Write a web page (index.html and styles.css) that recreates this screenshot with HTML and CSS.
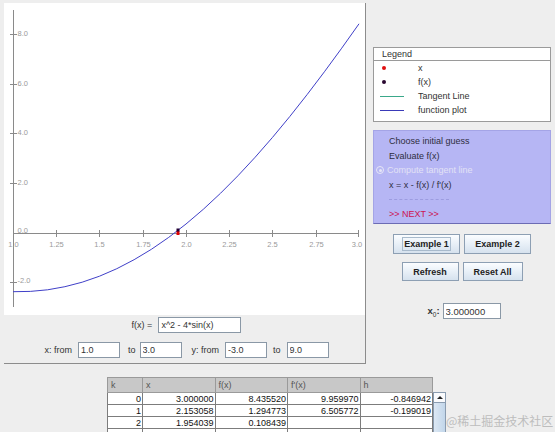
FILE: index.html
```html
<!DOCTYPE html>
<html lang="en">
<head>
    <meta charset="UTF-8">
    <meta name="viewport" content="width=device-width, initial-scale=1.0">
    <title>Newton's Method</title>
    <link rel="stylesheet" href="styles.css">
</head>
<body>
    <div class="top">
        <div class="plot-panel">
            <svg class="plot" width="361" height="312" viewBox="4 3 361 312">
                <rect x="4" y="3" width="361" height="312" fill="#ffffff"/>
                <g stroke="#8a8a8a" stroke-width="1">
                    <line x1="13.5" y1="10" x2="13.5" y2="307"/>
                    <line x1="13" y1="233.5" x2="359" y2="233.5"/>
                    <!-- x ticks -->
                    <line x1="56.5" y1="230" x2="56.5" y2="237"/>
                    <line x1="99.5" y1="230" x2="99.5" y2="237"/>
                    <line x1="143.5" y1="230" x2="143.5" y2="237"/>
                    <line x1="186.5" y1="230" x2="186.5" y2="237"/>
                    <line x1="229.5" y1="230" x2="229.5" y2="237"/>
                    <line x1="272.5" y1="230" x2="272.5" y2="237"/>
                    <line x1="316.5" y1="230" x2="316.5" y2="237"/>
                    <line x1="358.5" y1="230" x2="358.5" y2="237"/>
                    <!-- y ticks -->
                    <line x1="10" y1="34.5" x2="17" y2="34.5"/>
                    <line x1="10" y1="84.5" x2="17" y2="84.5"/>
                    <line x1="10" y1="133.5" x2="17" y2="133.5"/>
                    <line x1="10" y1="183.5" x2="17" y2="183.5"/>
                    <line x1="10" y1="282.5" x2="17" y2="282.5"/>
                </g>
                <g class="tick-label">
                    <text x="17.5" y="35.5">8.0</text>
                    <text x="17.5" y="85.5">6.0</text>
                    <text x="17.5" y="134.5">4.0</text>
                    <text x="17.5" y="184.5">2.0</text>
                    <text x="17.5" y="232.5">0.0</text>
                    <text x="17.5" y="283">-2.0</text>
                </g>
                <g class="tick-label" text-anchor="middle">
                    <text x="13.5" y="247">1.0</text>
                    <text x="56.5" y="247">1.25</text>
                    <text x="99.5" y="247">1.5</text>
                    <text x="143.5" y="247">1.75</text>
                    <text x="186.5" y="247">2.0</text>
                    <text x="229.5" y="247">2.25</text>
                    <text x="272.5" y="247">2.5</text>
                    <text x="316.5" y="247">2.75</text>
                    <text x="357" y="247">3.0</text>
                </g>
                <polyline fill="none" stroke="#4040c8" stroke-width="1"
                    points="13,291.7 30.3,291.4 47.6,289.8 64.9,286.7 82.2,282.2 99.5,276.2 116.8,268.7 134.1,259.7 151.4,249.3 168.7,237.4 186,224 203.3,209.3 220.6,193.2 237.9,175.8 255.2,157.2 272.5,137.4 289.8,116.5 307.1,94.6 324.4,71.8 341.7,48.2 359,23.8"/>
                <rect x="176.5" y="231" width="3" height="4" fill="#e00000"/>
                <rect x="176.5" y="228.5" width="3" height="3" fill="#220033"/>
            </svg>
            <div class="controls">
                <div class="ctl-row">
                    <label>f(x) =</label>
                    <input class="field wide" type="text" value="x^2 - 4*sin(x)">
                </div>
                <div class="ctl-row">
                    <label>x: from</label>
                    <input class="field" type="text" value="1.0">
                    <label class="to">to</label>
                    <input class="field" type="text" value="3.0">
                    <label class="yfrom">y: from</label>
                    <input class="field" type="text" value="-3.0">
                    <label>to</label>
                    <input class="field" type="text" value="9.0">
                </div>
            </div>
        </div>

        <div class="side">
            <div class="legend">
                <div class="legend-title">Legend</div>
                <div class="legend-item"><span class="mark"><span class="dot red"></span></span>x</div>
                <div class="legend-item"><span class="mark"><span class="dot dark"></span></span>f(x)</div>
                <div class="legend-item"><span class="mark"><span class="line green"></span></span>Tangent Line</div>
                <div class="legend-item"><span class="mark"><span class="line blue"></span></span>function plot</div>
            </div>

            <div class="steps">
                <div class="step">Choose initial guess</div>
                <div class="step">Evaluate f(x)</div>
                <div class="step current"><span class="radio"></span>Compute tangent line</div>
                <div class="step">x = x - f(x) / f'(x)</div>
                <div class="step"><span class="dashes"></span></div>
                <div class="step next">&gt;&gt; NEXT &gt;&gt;</div>
            </div>

            <div class="btn-row">
                <button class="btn ex"><span class="focus">Example 1</span></button>
                <button class="btn ex">Example 2</button>
            </div>
            <div class="btn-row second">
                <button class="btn refresh">Refresh</button>
                <button class="btn reset">Reset All</button>
            </div>

            <div class="x0-row">
                <label class="x0">x<sub>0</sub>:</label>
                <input class="field x0-field" type="text" value="3.000000">
            </div>
        </div>
    </div>

    <div class="table-pane">
        <table class="iter">
            <thead>
                <tr><th class="k">k</th><th>x</th><th>f(x)</th><th>f'(x)</th><th>h</th></tr>
            </thead>
            <tbody>
                <tr><td>0</td><td>3.000000</td><td>8.435520</td><td>9.959970</td><td>-0.846942</td></tr>
                <tr><td>1</td><td>2.153058</td><td>1.294773</td><td>6.505772</td><td>-0.199019</td></tr>
                <tr><td>2</td><td>1.954039</td><td>0.108439</td><td></td><td></td></tr>
                <tr><td></td><td></td><td></td><td></td><td></td></tr>
                <tr><td></td><td></td><td></td><td></td><td></td></tr>
            </tbody>
        </table>
        <div class="vscroll">
            <div class="corner"></div>
            <div class="arrow"></div>
            <div class="thumb"></div>
        </div>
    </div>

    <div class="watermark">@稀土掘金技术社区</div>
</body>
</html>
```

FILE: styles.css
```css
* {
    margin: 0;
    padding: 0;
    box-sizing: border-box;
}

body {
    font-family: 'Liberation Sans', Arial, sans-serif;
    font-size: 9px;
    color: #333;
    background-color: #eeeeee;
    width: 555px;
    height: 432px;
    overflow: hidden;
    position: relative;
}

.top {
    display: flex;
    align-items: flex-start;
    padding: 3px 0 0 4px;
}

/* plot + range controls */
.plot-panel {
    width: 362px;
    border-right: 1px solid #8c8c8c;
    border-bottom: 1px solid #8c8c8c;
}

.plot {
    display: block;
}

.tick-label {
    font-family: 'Liberation Sans', Arial, sans-serif;
    font-size: 7.5px;
    fill: #9a9a9a;
}

.controls {
    display: flex;
    flex-direction: column;
    gap: 9px;
    padding: 2px 0 5px 4px;
}

.ctl-row {
    display: flex;
    justify-content: center;
    align-items: center;
    gap: 6px;
    height: 16px;
}

.ctl-row label {
    color: #333;
}

.ctl-row .to {
    margin: 0 -2px 0 2px;
}

.ctl-row .yfrom {
    margin-left: 4px;
}

.field {
    width: 42px;
    height: 16px;
    border: 1px solid #8a98a6;
    background-color: #fff;
    font-family: 'Liberation Sans', Arial, sans-serif;
    font-size: 9px;
    color: #333;
    padding: 0 2px;
    outline: none;
}

.field.wide {
    width: 83px;
}

/* right column */
.side {
    width: 178px;
    margin: 44px 0 0 7px;
}

.legend {
    background: #ffffff;
    border: 1px solid #9a9a9a;
    padding-bottom: 4px;
}

.legend-title {
    height: 13px;
    line-height: 12px;
    padding-left: 8px;
    border-bottom: 1px solid #9a9a9a;
    color: #333;
}

.legend-item {
    display: flex;
    align-items: center;
    height: 14px;
    color: #333;
}

.mark {
    display: flex;
    align-items: center;
    width: 24px;
    margin: 0 14px 0 6px;
}

.dot {
    width: 4px;
    height: 4px;
    border-radius: 50%;
    margin-left: 2px;
}

.dot.red {
    background: #e01010;
}

.dot.dark {
    background: #2a0830;
}

.line {
    width: 24px;
    height: 1px;
}

.line.green {
    background: #3aa88a;
}

.line.blue {
    background: #3a3ab8;
}

.steps {
    margin-top: 8px;
    background: #b6b6f4;
    border: 1px solid #a4a4e6;
    border-bottom-color: #6c6cb4;
    padding: 3px 0 2px 0;
}

.step {
    display: flex;
    align-items: center;
    height: 14.5px;
    padding-left: 15px;
    color: #2e2e3e;
}

.step.current {
    padding-left: 2px;
    color: #e2e2f4;
}

.radio {
    width: 8px;
    height: 8px;
    border: 1px solid #e6e6f6;
    border-radius: 50%;
    margin-right: 3px;
    position: relative;
}

.radio::after {
    content: "";
    position: absolute;
    left: 1.5px;
    top: 1.5px;
    width: 3px;
    height: 3px;
    border-radius: 50%;
    background: #e6e6f6;
}

.dashes {
    width: 60px;
    border-top: 1px dashed #9c9ce0;
}

.step.next {
    color: #cc1450;
}

.btn-row {
    display: flex;
    justify-content: center;
    gap: 4px;
    margin-top: 10px;
}

.btn-row.second {
    margin-top: 8px;
}

.btn {
    height: 20px;
    border: 1px solid #8d9fb3;
    background: linear-gradient(to bottom, #fbfdff 0%, #eaf1f8 45%, #d6e2ee 100%);
    font-family: 'Liberation Sans', Arial, sans-serif;
    font-size: 9px;
    font-weight: bold;
    color: #222;
    cursor: pointer;
}

.btn.ex {
    width: 67px;
}

.btn.refresh {
    width: 57px;
    height: 19px;
}

.btn.reset {
    width: 60px;
    height: 19px;
}

.focus {
    border: 1px solid #a8bacc;
    padding: 1px 1px;
}

.x0-row {
    display: flex;
    justify-content: center;
    align-items: center;
    gap: 3px;
    margin: 22px 0 0 4px;
}

.x0 {
    font-weight: bold;
    font-size: 9.5px;
    color: #333;
}

.x0 sub {
    font-size: 6.5px;
    font-weight: normal;
}

.x0-field {
    width: 58px;
    font-size: 9.5px;
}

/* iteration table */
.table-pane {
    display: flex;
    align-items: flex-start;
    margin: 13px 0 0 107px;
}

.iter {
    border-collapse: collapse;
    table-layout: fixed;
    width: 325px;
    font-size: 9px;
}

.iter th {
    height: 15px;
    line-height: 12px;
    background: #c8c8c8;
    border: 1px solid #9a9a9a;
    color: #555;
    font-weight: normal;
    text-align: left;
    padding: 0 3px;
    width: 72.5px;
}

.iter th.k {
    width: 35px;
}

.iter td {
    height: 12px;
    border: 1px solid #7c7c7c;
    background: #fff;
    color: #111;
    text-align: right;
    padding: 0 1px;
    line-height: 10px;
}

.vscroll {
    width: 13px;
    display: flex;
    flex-direction: column;
}

.corner {
    height: 15px;
}

.arrow {
    height: 11px;
    background: #fafbfd;
    border: 1px solid #8a9cb0;
    position: relative;
}

.arrow::after {
    content: "";
    position: absolute;
    left: 3px;
    top: 3px;
    border-left: 3px solid transparent;
    border-right: 3px solid transparent;
    border-bottom: 3px solid #222;
}

.thumb {
    height: 40px;
    background: linear-gradient(to right, #dce8f4, #c2d6ea);
    border: 1px solid #8a9cb0;
    border-top: none;
}

.watermark {
    position: absolute;
    left: 446px;
    top: 412px;
    font-family: 'Noto Sans CJK SC', sans-serif;
    font-size: 12px;
    color: #bdbdbd;
}
```
